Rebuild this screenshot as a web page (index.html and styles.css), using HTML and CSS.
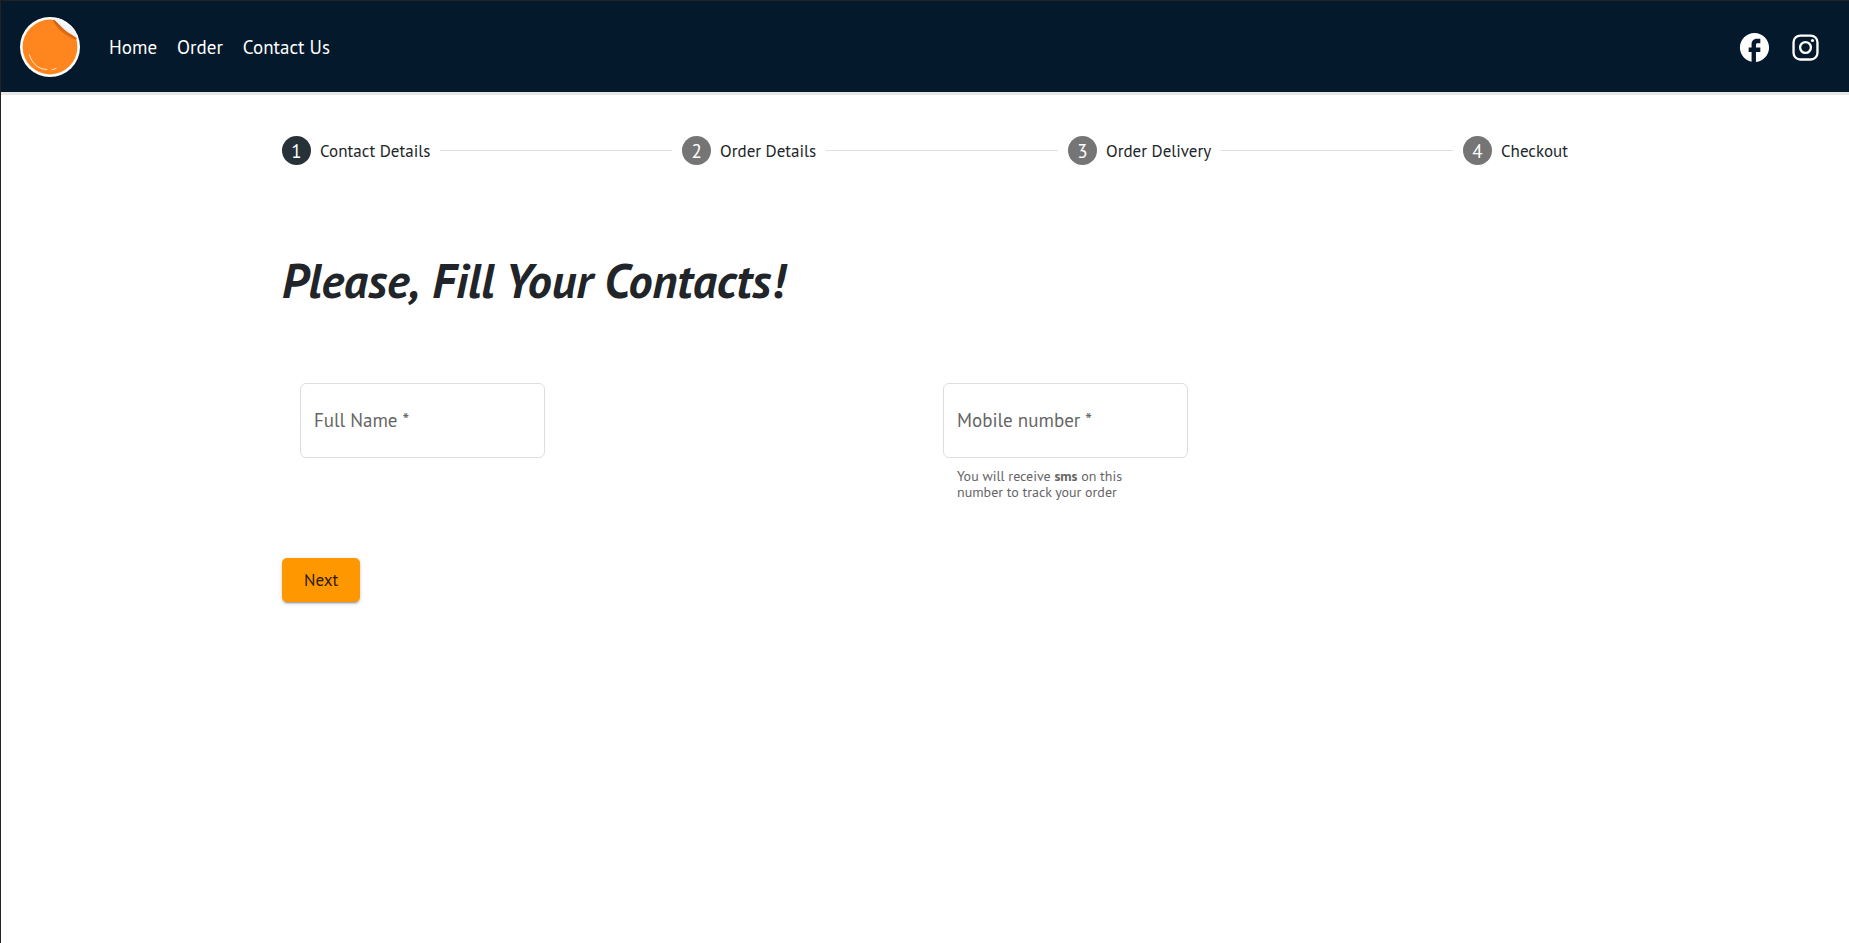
FILE: index.html
```html
<!DOCTYPE html>
<html lang="en">
<head>
<meta charset="utf-8">
<meta name="viewport" content="width=device-width, initial-scale=1">
<title>Order</title>
<link rel="stylesheet" href="styles.css">
</head>
<body>
<header class="topbar">
  <a class="brand" href="#" aria-label="Home page">
    <svg class="logo" viewBox="0 0 60 60" aria-hidden="true">
      <defs>
        <linearGradient id="fold" x1="0.25" y1="0.8" x2="0.75" y2="0.2">
          <stop offset="0" stop-color="#dcdde6"/>
          <stop offset="0.5" stop-color="#f6f6fa"/>
          <stop offset="1" stop-color="#ffffff"/>
        </linearGradient>
        <linearGradient id="shade" gradientUnits="userSpaceOnUse" x1="47" y1="12" x2="41" y2="20">
          <stop offset="0" stop-color="#c95c08"/>
          <stop offset="1" stop-color="#ff861f"/>
        </linearGradient>
        <clipPath id="disc"><circle cx="30" cy="30" r="30"/></clipPath>
      </defs>
      <circle cx="30" cy="30" r="30" fill="#fff"/>
      <circle cx="30" cy="30" r="27.4" fill="#ff861f"/>
      <g clip-path="url(#disc)">
        <path d="M33 3c3 8 10 15 23 20l1-2L35 3z" fill="url(#shade)"/>
        <path d="M34 2.500L40 0L60 16L57 21.500C53 18 50 17 46 14C41 10 38 6 34 2.500z" fill="url(#fold)"/>
      </g>
      <path d="M36 7c4 7 11 12 18 13" fill="none" stroke="#e06c0d" stroke-width="0.700"/>
      <path d="M9.500 38C12 47 19 52.500 27 52.500M32 52.500q2 0 4-1" fill="none" stroke="#fff" stroke-width="0.800" stroke-linecap="round"/>
    </svg>
  </a>
  <nav class="nav">
    <a href="#">Home</a>
    <a href="#">Order</a>
    <a href="#">Contact Us</a>
  </nav>
  <div class="social">
    <a href="#" aria-label="Facebook">
      <svg viewBox="0 0 24 24" fill="currentColor"><path d="M22 12c0-5.520-4.480-10-10-10S2 6.480 2 12c0 4.840 3.440 8.870 8 9.800V15H8v-3h2V9.500C10 7.570 11.570 6 13.500 6H16v3h-2c-.55 0-1 .45-1 1v2h3v3h-3v6.950c5.050-.5 9-4.760 9-9.950z"/></svg>
    </a>
    <a href="#" aria-label="Instagram">
      <svg viewBox="0 0 24 24" fill="none" stroke="currentColor" stroke-width="1.600"><rect x="3.800" y="3.800" width="16.400" height="16.400" rx="4.600"/><circle cx="12" cy="12" r="3.700"/><circle cx="16.800" cy="7.200" r="1.100" fill="currentColor" stroke="none"/></svg>
    </a>
  </div>
</header>
<main class="content">
  <ol class="stepper">
    <li class="step active" aria-current="step"><span class="badge">1</span>Contact Details</li>
    <li class="line" role="presentation"></li>
    <li class="step"><span class="badge">2</span>Order Details</li>
    <li class="line" role="presentation"></li>
    <li class="step"><span class="badge">3</span>Order Delivery</li>
    <li class="line" role="presentation"></li>
    <li class="step"><span class="badge">4</span>Checkout</li>
  </ol>
  <h1 class="title"><span class="lead">Please,</span> Fill Your Contacts!</h1>
  <form class="form">
    <div class="fields">
      <div class="field">
        <div class="control">
          <input id="full-name" type="text" required>
          <label for="full-name">Full Name *</label>
        </div>
      </div>
      <div class="field">
        <div class="control">
          <input id="mobile" type="tel" required aria-describedby="mobile-hint">
          <label for="mobile">Mobile number *</label>
        </div>
        <p class="hint" id="mobile-hint">You will receive <b>sms</b> on this number to track your order</p>
      </div>
    </div>
    <button class="next" type="submit">Next</button>
  </form>
</main>
</body>
</html>
```
FILE: styles.css
```css
* {
  box-sizing: border-box;
}

body {
  margin: 0;
  min-height: 100vh;
  border-top: 1px solid #222;
  border-left: 1px solid #222;
  background: #fff;
  color: #212529;
  font-family: "PT Sans", Lato, sans-serif;
  font-size: 17px;
}

a {
  color: inherit;
  text-decoration: none;
}

.topbar {
  display: flex;
  align-items: center;
  padding: 16px 26px 15px 19px;
  background: #04192c;
  color: #fff;
  box-shadow: 0 3px 0 #e7e7e7;
}

.logo {
  display: block;
  width: 60px;
  height: 60px;
}

.nav {
  display: flex;
  gap: 20px;
  margin-left: 29px;
  font-size: 19px;
  line-height: 24px;
}

.social {
  display: flex;
  gap: 16px;
  margin-left: auto;
}

.social svg {
  display: block;
  width: 35px;
  height: 35px;
}

.content {
  max-width: 1286px;
  margin: 0 auto;
  padding-top: 44px;
}

.stepper {
  display: flex;
  align-items: center;
  gap: 10px;
  margin: 0;
  padding: 0;
  list-style: none;
}

.step {
  display: flex;
  align-items: center;
  gap: 9px;
  white-space: nowrap;
}

.badge {
  display: grid;
  place-items: center;
  width: 29px;
  height: 29px;
  border-radius: 50%;
  background: #757575;
  color: #fff;
  font-size: 19px;
}

.active .badge {
  background: #263238;
}

.line {
  flex: 1;
  height: 1px;
  background: #dedede;
}

.title {
  margin: 86px 0 0;
  font-size: 48px;
  font-style: italic;
  font-weight: 700;
  line-height: 58px;
}

.lead {
  display: inline-block;
}

.fields {
  display: grid;
  grid-template-columns: 1fr 1fr;
  margin-top: 74px;
}

.field {
  width: 245px;
  margin-left: 18px;
}

.control {
  position: relative;
}

.control input {
  display: block;
  width: 100%;
  height: 75px;
  padding: 0 14px;
  border: 1px solid #dedede;
  border-radius: 6px;
  background: none;
  box-shadow: none;
  color: inherit;
  font: inherit;
}

.control label {
  position: absolute;
  inset: 0 14px 2px;
  display: flex;
  align-items: center;
  color: #666;
  font-size: 19px;
  pointer-events: none;
}

.control input:focus + label,
.control input:valid + label {
  bottom: auto;
  font-size: 12px;
}

.hint {
  max-width: 190px;
  margin: 10px 14px 0;
  color: #666;
  font-size: 14px;
  line-height: 16px;
}

.next {
  margin-top: 58px;
  padding: 0 22px;
  height: 44px;
  border: 0;
  border-radius: 5px;
  background: #ff9800;
  color: #2b1a00;
  font: inherit;
  box-shadow: 0 3px 1px -2px rgba(0, 0, 0, 0.2), 0 2px 2px rgba(0, 0, 0, 0.14), 0 1px 5px rgba(0, 0, 0, 0.12);
}
```
